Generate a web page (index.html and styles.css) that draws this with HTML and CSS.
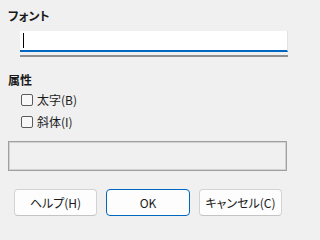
FILE: index.html
```html
<!DOCTYPE html>
<html lang="ja">
<head>
<meta charset="utf-8">
<link rel="stylesheet" href="styles.css">
</head>
<body>
<div class="dialog">
  <div class="heading heading-font">フォント</div>
  <div class="field-wrap">
    <div class="field"><span class="caret"></span></div>
    <div class="field-bar"></div>
  </div>
  <div class="heading heading-attr">属性</div>
  <div class="checks">
    <label class="check"><span class="box"></span><span class="check-text">太字(B)</span></label>
    <label class="check"><span class="box"></span><span class="check-text">斜体(I)</span></label>
  </div>
  <div class="preview"></div>
  <div class="buttons">
    <button class="btn">ヘルプ(H)</button>
    <button class="btn btn-default">OK</button>
    <button class="btn">キャンセル(C)</button>
  </div>
</div>
</body>
</html>
```

FILE: styles.css
```css
html, body {
  margin: 0;
  padding: 0;
  background: #f0f0f0;
}
body {
  width: 296px;
  height: 231px;
  overflow: hidden;
  font-family: "Noto Sans CJK JP", "Noto Sans", sans-serif;
  font-size: 12px;
  color: #1a1a1a;
  font-feature-settings: "palt";
}
.dialog {
  display: flex;
  flex-direction: column;
}
.heading {
  margin-left: 8px;
  font-weight: 700;
  line-height: 16px;
  height: 16px;
}
.heading-font { margin-top: 8px; }
.heading-attr { margin-top: 15px; }
.field-wrap {
  margin: 7px 0 0 20px;
  width: 268px;
  display: flex;
  flex-direction: column;
}
.field {
  height: 19px;
  background: #ffffff;
  border-right: 1px solid #e3e3e3;
  border-bottom: 2px solid #0067c0;
  display: flex;
  align-items: center;
  padding-left: 3px;
}
.caret {
  width: 1px;
  height: 15px;
  background: #000;
}
.field-bar {
  margin-top: 3px;
  height: 2px;
  background: #8e8e8e;
}
.checks {
  margin-top: 1px;
  display: flex;
  flex-direction: column;
}
.check {
  height: 22px;
  display: flex;
  align-items: center;
  padding-left: 21px;
}
.box {
  width: 10px;
  height: 10px;
  border: 1px solid #5c5c5c;
  border-radius: 2px;
  background: #f8f8f8;
}
.check-text {
  margin-left: 4px;
  line-height: 16px;
}
.preview {
  margin: 8px 0 0 8px;
  width: 277px;
  height: 28px;
  border: 1px solid #a0a0a0;
  box-shadow: inset 0 0 0 1px #d2d2d2;
}
.buttons {
  margin: 18px 0 0 14px;
  display: flex;
  gap: 9px;
}
.btn {
  width: 83px;
  height: 27px;
  padding: 0;
  font-family: inherit;
  font-size: 12px;
  font-feature-settings: "palt";
  color: #1a1a1a;
  background: #fdfdfd;
  border: 1px solid #d3d3d3;
  border-bottom-color: #c4c4c4;
  border-radius: 4px;
}
.btn-default {
  width: 84px;
  border: 1px solid #0067c0;
}
```
